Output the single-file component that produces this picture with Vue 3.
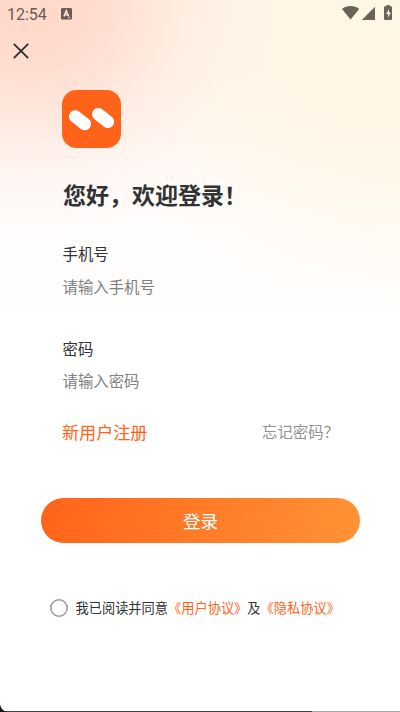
<script setup>
import { ref } from 'vue'

const phone = ref('')
const password = ref('')
const agreed = ref(false)
</script>

<template>
  <main class="screen">
    <header class="status">
      <span class="time">12:54</span>
      <svg class="badge" width="11" height="12" viewBox="0 0 11 12">
        <rect width="11" height="11.5" rx="1.2" fill="#6c5b54" />
        <path d="M3 8.4 5.3 2.8 7.6 8.4M3.8 6.8h3" fill="none" stroke="#ffe3d8" stroke-width="1.5" />
        <path d="M7 9.7h2.4" stroke="#ffe3d8" stroke-width=".8" />
      </svg>
      <svg class="signals" width="51" height="15" viewBox="0 0 51 15">
        <g fill="#69645a">
          <path d="M0 3.9C4.8.1 12.4.1 17.2 3.9L8.6 14.6Z" />
          <path d="M33 1.8V15H19.8Z" />
          <path d="M44 1.3h1.6V0h3.2v1.3h1.4q.8 0 .8.8v12q0 .9-.9.9h-6.2q-.9 0-.9-.9v-12q0-.8 1-.8Z" transform="translate(-1)" />
        </g>
        <path d="M46.9 4 44.2 8.9h2V12.8L48.8 7.6h-1.9Z" fill="#fff7e7" />
      </svg>
    </header>

    <button class="close" aria-label="关闭">
      <svg width="16" height="16" viewBox="0 0 16 16">
        <path d="m.8.8 14.4 14.4M15.2.8.8 15.2" fill="none" stroke="#292b2d" stroke-width="1.7" />
      </svg>
    </button>

    <section class="content">
      <svg class="logo" width="59" height="58" viewBox="0 0 59 58">
        <rect width="59" height="58" rx="14.5" fill="#ff631a" />
        <path d="m13.2 26.5 9.6 7.4M36.3 24.3l9.6 7.4" fill="none" stroke="#fff" stroke-width="12.6" stroke-linecap="round" />
      </svg>
      <h1>您好，欢迎登录！</h1>
      <label class="field">
        <span>手机号</span>
        <input v-model="phone" type="tel" placeholder="请输入手机号">
      </label>
      <label class="field second">
        <span>密码</span>
        <input v-model="password" type="password" placeholder="请输入密码">
      </label>
      <nav class="links">
        <a class="register">新用户注册</a>
        <a class="forgot">忘记密码？</a>
      </nav>
    </section>

    <button class="login">登录</button>

    <div class="agreement">
      <button class="check" :class="{ agreed }" aria-label="同意协议" @click="agreed = !agreed">
        <svg width="18" height="18" viewBox="0 0 18 18">
          <circle cx="9" cy="9" r="8.2" stroke-width="1.5" />
        </svg>
      </button>
      <p>我已阅读并同意<a>《用户协议》</a>及<a>《隐私协议》</a></p>
    </div>
    <div class="edge"></div>
  </main>
</template>

<style>
body { background: #fff; }
</style>

<style scoped>
.screen {
  box-sizing: border-box;
  width: 400px;
  height: 712px;
  overflow: hidden;
  display: flex;
  flex-direction: column;
  color: #303234;
  font-family: "Noto Sans CJK SC", sans-serif;
  background:
    linear-gradient(180deg, transparent 310px, #fff 310px),
    radial-gradient(ellipse 255px 240px at 30px 0, #ffd9ca 0, rgba(255,217,202,.92) 22%, rgba(255,219,205,.65) 42%, rgba(255,225,212,.36) 62%, rgba(255,235,226,.13) 83%, transparent 100%),
    radial-gradient(ellipse 330px 330px at 400px 0, #fff6e6 0, rgba(255,246,230,.95) 42%, rgba(255,247,232,.65) 65%, rgba(255,249,240,.25) 85%, transparent 100%),
    linear-gradient(180deg, #fff1e9 0, #fff4ee 80px, #fff9f6 160px, #fffdfc 230px, #fffefd 310px);
}
button { border: 0; padding: 0; background: none; font: inherit; }
svg { display: block; flex: none; }
.status {
  display: flex;
  align-items: flex-start;
  height: 43px;
  flex: none;
  padding: 0 7px;
}
.time {
  width: 54px;
  padding-top: 5px;
  font: 16px/19px Roboto, sans-serif;
  color: #6c5b54;
}
.badge { margin-top: 8px; }
.signals { margin: 5px 0 0 auto; }
.close { width: 16px; height: 16px; margin-left: 13px; flex: none; }
.content { padding: 31px 61px 0 62px; }
h1 {
  margin: 29px 0 0 1px;
  font-size: 23px;
  line-height: 34px;
  font-weight: 700;
  white-space: nowrap;
}
.field {
  display: flex;
  flex-direction: column;
  margin-top: 30px;
  font-size: 15.4px;
}
.field span { padding-left: .5px; line-height: 24px; }
.field input {
  height: 24px;
  margin: 9px 0 0;
  padding: 0 0 0 .5px;
  border: 0;
  outline: 0;
  background: transparent;
  font: inherit;
}
.field input::placeholder { color: #808080; opacity: 1; }
.second { margin-top: 38px; }
.second input { margin-top: 8px; }
.links {
  display: flex;
  align-items: center;
  justify-content: space-between;
  height: 28px;
  margin-top: 25px;
}
.register { color: #ff631a; font-size: 17.1px; }
.forgot { color: #929292; font-size: 15.4px; }
.login {
  flex: none;
  width: 319px;
  height: 45px;
  margin: 53px 0 0 41px;
  border-radius: 23px;
  background: linear-gradient(105deg, #ff631a, #ff9336);
  color: #fff;
  font-size: 17.5px;
  line-height: 44px;
}
.agreement {
  display: flex;
  align-items: center;
  height: 24px;
  margin: 53px 0 0 50px;
}
.check { width: 18px; height: 18px; }
.check circle { fill: none; stroke: #979797; }
.check.agreed circle { fill: #ff631a; stroke: #ff631a; }
.agreement p { margin: 0 0 0 7.5px; font-size: 13.22px; line-height: 24px; white-space: nowrap; }
.agreement a { color: #ff631a; }
.edge {
  height: 8px;
  flex: none;
  margin-top: auto;
  background:
    radial-gradient(circle 8px at 8px 0, transparent 7.5px, #221710 8px) 0 0 / 8px 8px no-repeat,
    linear-gradient(90deg, #444 312px, #a4a4a4 312px) 0 100% / 100% 1px no-repeat;
}
</style>
